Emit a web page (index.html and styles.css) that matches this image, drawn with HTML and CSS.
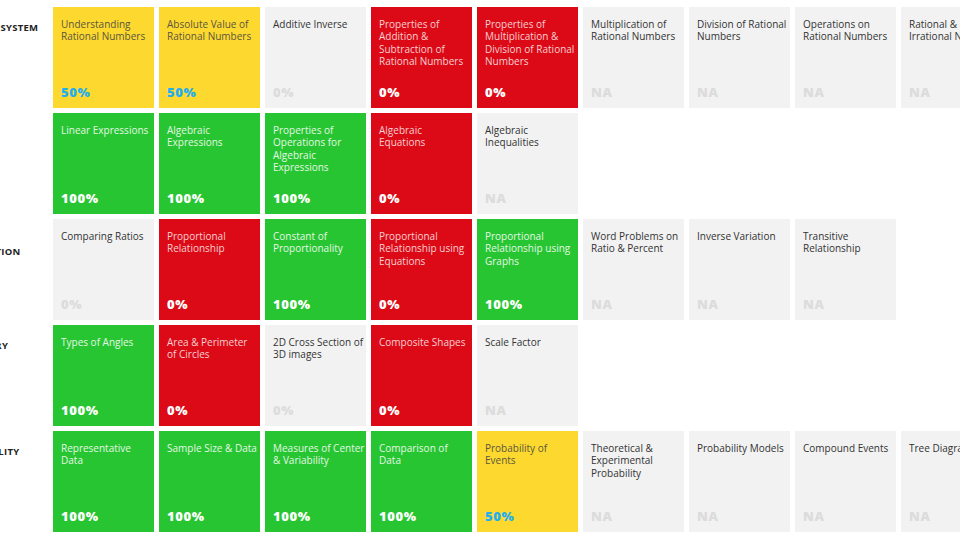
FILE: index.html
```html
<!DOCTYPE html>
<html lang="en">
<head>
<meta charset="utf-8">
<title>Mastery Report</title>
<link rel="stylesheet" href="styles.css">
</head>
<body>
<div class="board">
  <div class="row">
    <div class="label">NUMBER SYSTEM</div>
    <div class="tiles">
      <div class="tile yellow"><div class="title">Understanding<br>Rational Numbers</div><div class="pct">50%</div></div>
      <div class="tile yellow"><div class="title">Absolute Value of<br>Rational Numbers</div><div class="pct">50%</div></div>
      <div class="tile gray"><div class="title">Additive Inverse</div><div class="pct">0%</div></div>
      <div class="tile red"><div class="title">Properties of<br>Addition &amp;<br>Subtraction of<br>Rational Numbers</div><div class="pct">0%</div></div>
      <div class="tile red"><div class="title">Properties of<br>Multiplication &amp;<br>Division of Rational<br>Numbers</div><div class="pct">0%</div></div>
      <div class="tile gray"><div class="title">Multiplication of<br>Rational Numbers</div><div class="pct">NA</div></div>
      <div class="tile gray"><div class="title">Division of Rational<br>Numbers</div><div class="pct">NA</div></div>
      <div class="tile gray"><div class="title">Operations on<br>Rational Numbers</div><div class="pct">NA</div></div>
      <div class="tile gray"><div class="title">Rational &amp;<br>Irrational Numbers</div><div class="pct">NA</div></div>
    </div>
  </div>
  <div class="row">
    <div class="label">ALGEBRA</div>
    <div class="tiles">
      <div class="tile green"><div class="title">Linear Expressions</div><div class="pct">100%</div></div>
      <div class="tile green"><div class="title">Algebraic<br>Expressions</div><div class="pct">100%</div></div>
      <div class="tile green"><div class="title">Properties of<br>Operations for<br>Algebraic<br>Expressions</div><div class="pct">100%</div></div>
      <div class="tile red"><div class="title">Algebraic<br>Equations</div><div class="pct">0%</div></div>
      <div class="tile gray"><div class="title">Algebraic<br>Inequalities</div><div class="pct">NA</div></div>
    </div>
  </div>
  <div class="row">
    <div class="label">RATIO &amp;<br>PROPORTION</div>
    <div class="tiles">
      <div class="tile gray"><div class="title">Comparing Ratios</div><div class="pct">0%</div></div>
      <div class="tile red"><div class="title">Proportional<br>Relationship</div><div class="pct">0%</div></div>
      <div class="tile green"><div class="title">Constant of<br>Proportionality</div><div class="pct">100%</div></div>
      <div class="tile red"><div class="title">Proportional<br>Relationship using<br>Equations</div><div class="pct">0%</div></div>
      <div class="tile green"><div class="title">Proportional<br>Relationship using<br>Graphs</div><div class="pct">100%</div></div>
      <div class="tile gray"><div class="title">Word Problems on<br>Ratio &amp; Percent</div><div class="pct">NA</div></div>
      <div class="tile gray"><div class="title">Inverse Variation</div><div class="pct">NA</div></div>
      <div class="tile gray"><div class="title">Transitive<br>Relationship</div><div class="pct">NA</div></div>
    </div>
  </div>
  <div class="row">
    <div class="label">GEOMETRY</div>
    <div class="tiles">
      <div class="tile green"><div class="title">Types of Angles</div><div class="pct">100%</div></div>
      <div class="tile red"><div class="title">Area &amp; Perimeter<br>of Circles</div><div class="pct">0%</div></div>
      <div class="tile gray"><div class="title">2D Cross Section of<br>3D images</div><div class="pct">0%</div></div>
      <div class="tile red"><div class="title">Composite Shapes</div><div class="pct">0%</div></div>
      <div class="tile gray"><div class="title">Scale Factor</div><div class="pct">NA</div></div>
    </div>
  </div>
  <div class="row">
    <div class="label">PROBABILITY</div>
    <div class="tiles">
      <div class="tile green"><div class="title">Representative<br>Data</div><div class="pct">100%</div></div>
      <div class="tile green"><div class="title">Sample Size &amp; Data</div><div class="pct">100%</div></div>
      <div class="tile green"><div class="title">Measures of Center<br>&amp; Variability</div><div class="pct">100%</div></div>
      <div class="tile green"><div class="title">Comparison of<br>Data</div><div class="pct">100%</div></div>
      <div class="tile yellow"><div class="title">Probability of<br>Events</div><div class="pct">50%</div></div>
      <div class="tile gray"><div class="title">Theoretical &amp;<br>Experimental<br>Probability</div><div class="pct">NA</div></div>
      <div class="tile gray"><div class="title">Probability Models</div><div class="pct">NA</div></div>
      <div class="tile gray"><div class="title">Compound Events</div><div class="pct">NA</div></div>
      <div class="tile gray"><div class="title">Tree Diagrams</div><div class="pct">NA</div></div>
    </div>
  </div>
</div>
</body>
</html>
```

FILE: styles.css
```css
html, body {
  margin: 0;
  padding: 0;
  overflow: hidden;
  background: #ffffff;
  font-family: "Open Sans", "Noto Sans", sans-serif;
}

.board {
  display: flex;
  flex-direction: column;
  gap: 5px;
  padding-top: 7px;
  margin-left: -46px;
  width: 1100px;
}

.row {
  display: flex;
  gap: 5px;
  align-items: flex-start;
}

.label {
  flex: 0 0 94px;
  padding-top: 15px;
  font-size: 9.5px;
  font-weight: 700;
  line-height: 12px;
  color: #222222;
  letter-spacing: 0.3px;
}

.tiles {
  display: flex;
  gap: 5px;
}

.tile {
  flex: 0 0 101px;
  width: 101px;
  min-width: 0;
  height: 101px;
  box-sizing: border-box;
  overflow: hidden;
  padding: 11px 4px 8px 8px;
  display: flex;
  flex-direction: column;
  justify-content: space-between;
}

.title {
  font-size: 10px;
  line-height: 12.4px;
  white-space: nowrap;
}

.pct {
  font-size: 13px;
  font-weight: 800;
  line-height: 16px;
  letter-spacing: 0.6px;
}

.yellow { background: #fdd92f; }
.yellow .title { color: #5a5540; }
.yellow .pct { color: #22aef0; }

.red { background: #dc0a17; }
.red .title { color: #f6cfd1; }
.red .pct { color: #ffffff; }

.green { background: #27c531; }
.green .title { color: #e4f7e5; }
.green .pct { color: #ffffff; }

.gray { background: #f2f2f2; }
.gray .title { color: #333333; }
.gray .pct { color: #dcdcdc; }
```
